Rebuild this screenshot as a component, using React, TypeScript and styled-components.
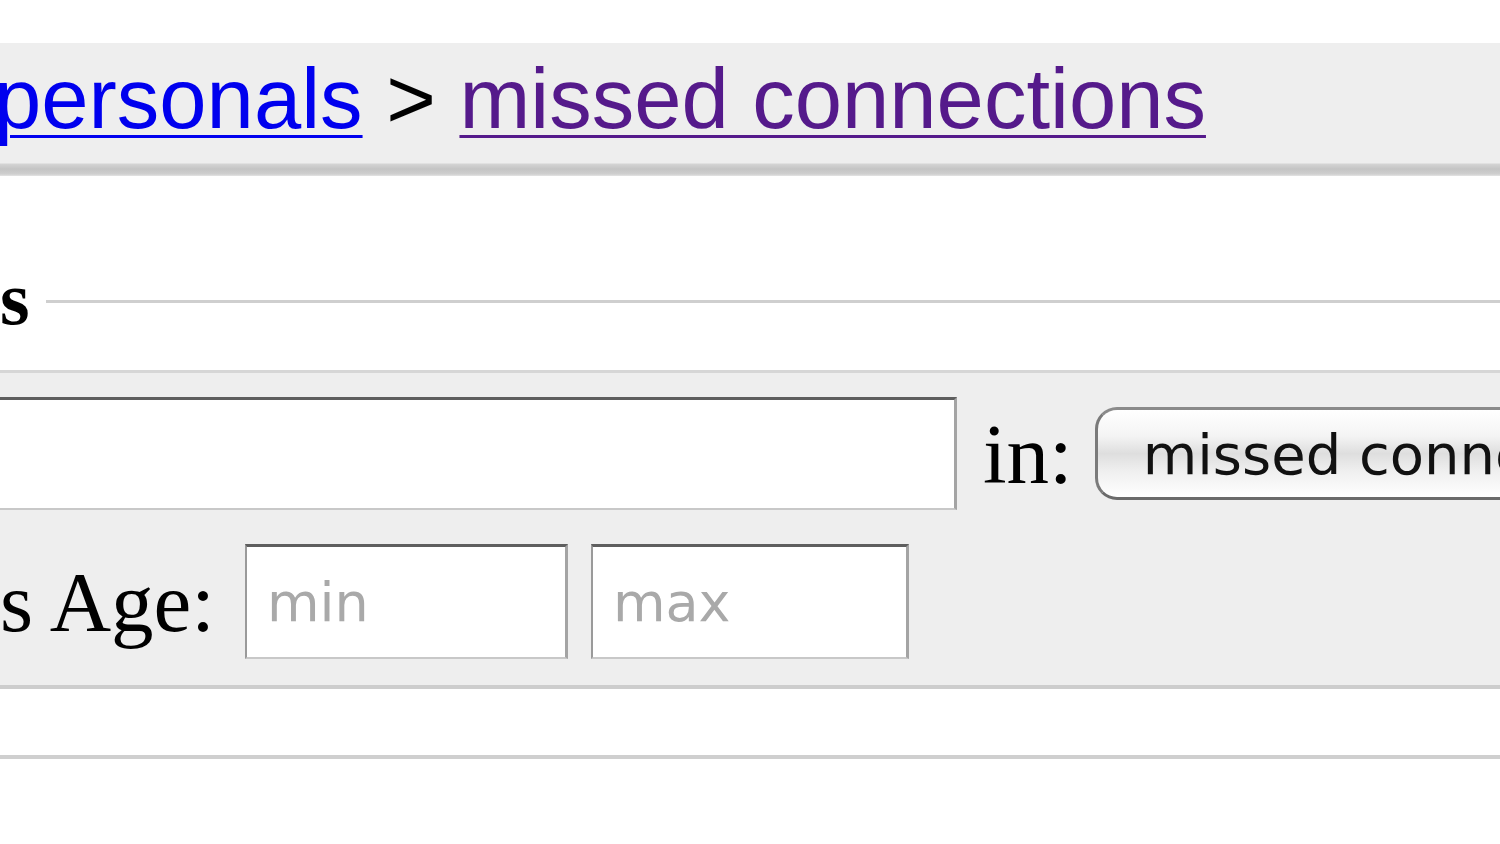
import React from "react";
import styled, { createGlobalStyle } from "styled-components";

const GlobalStyle = createGlobalStyle`
  html, body { margin: 0; padding: 0; background: #ffffff; }
  body { overflow: hidden; }
`;

const Page = styled.div`
  width: 1500px;
  height: 844px;
  overflow: hidden;
  background: #ffffff;
  padding-top: 43px;
  box-sizing: border-box;
`;

const Header = styled.div`
  height: 133px;
  box-sizing: border-box;
  background: linear-gradient(
    to bottom,
    #eeeeee 0,
    #eeeeee 120px,
    #d4d4d4 121px,
    #c4c4c4 126px,
    #cfcfcf 131px,
    #e4e4e4 133px
  );
  display: flex;
  align-items: flex-start;
  padding-top: 6px;
`;

const Crumbs = styled.div`
  font-family: "Liberation Sans", Arial, sans-serif;
  font-size: 85px;
  line-height: 100px;
  margin-left: -6px;
  white-space: nowrap;
  color: #000;
`;

const CrumbLink = styled.a<{ $visited?: boolean }>`
  color: ${(p) => (p.$visited ? "#551a8b" : "#0000ee")};
  text-decoration: underline;
  text-decoration-thickness: 3px;
  text-underline-offset: 7px;
`;

const Sep = styled.span`
  color: #000;
`;

const Fieldset = styled.div`
  margin-top: 95px;
  display: flex;
  flex-direction: column;
`;

const LegendRow = styled.div`
  display: flex;
  align-items: center;
  height: 60px;
`;

const Legend = styled.span`
  font-family: "Liberation Serif", "Times New Roman", serif;
  font-weight: bold;
  font-size: 76px;
  line-height: 60px;
  padding-right: 16px;
  padding-bottom: 6px;
`;

const LegendLine = styled.div`
  flex: 1;
  height: 3px;
  background: #cfcfcf;
`;

const FormBox = styled.div`
  margin-top: 39px;
  background: #eeeeee;
  border-top: 3px solid #d6d6d6;
  border-bottom: 4px solid #cdcdcd;
  height: 319px;
  box-sizing: border-box;
  display: flex;
  flex-direction: column;
  gap: 34px;
  padding-top: 24px;
  overflow: hidden;
`;

const Row = styled.div`
  display: flex;
  align-items: center;
`;

const TextInput = styled.div`
  flex-shrink: 0;
  width: 1000px;
  height: 113px;
  margin-left: -43px;
  box-sizing: border-box;
  background: #fff;
  border-top: 3px solid #5e5e5e;
  border-left: 2px solid #9a9a9a;
  border-right: 3px solid #a4a4a4;
  border-bottom: 2px solid #c8c8c8;
`;

const Label = styled.span<{ $ml: number }>`
  flex-shrink: 0;
  font-family: "Liberation Serif", "Times New Roman", serif;
  font-size: 85px;
  line-height: 90px;
  color: #000;
  margin-left: ${(p) => p.$ml}px;
  white-space: nowrap;
`;

const SelectButton = styled.div`
  flex-shrink: 0;
  margin-left: 22px;
  width: 520px;
  height: 93px;
  box-sizing: border-box;
  border: 3px solid #7a7a7a;
  border-top-color: #8a8a8a;
  border-bottom-color: #6a6a6a;
  border-radius: 22px;
  background: linear-gradient(
    to bottom,
    #ffffff 0%,
    #f4f4f4 30%,
    #dedede 50%,
    #efefef 70%,
    #ffffff 100%
  );
  display: flex;
  align-items: center;
  padding-left: 45px;
  padding-top: 2px;
  font-family: "DejaVu Sans", "Lucida Grande", sans-serif;
  font-size: 56px;
  color: #111;
  white-space: nowrap;
  overflow: hidden;
`;

const AgeInput = styled.div<{ $w: number; $ml: number }>`
  flex-shrink: 0;
  width: ${(p) => p.$w}px;
  height: 115px;
  margin-left: ${(p) => p.$ml}px;
  box-sizing: border-box;
  background: #fff;
  border-top: 3px solid #5e5e5e;
  border-left: 2px solid #9a9a9a;
  border-right: 3px solid #a4a4a4;
  border-bottom: 2px solid #c8c8c8;
  display: flex;
  align-items: center;
  padding-left: 20px;
  font-family: "DejaVu Sans", sans-serif;
  font-size: 54px;
  color: #a9a9a9;
`;

const BottomGap = styled.div`
  height: 66px;
  border-bottom: 4px solid #cfcfcf;
`;

export default function App() {
  return (
    <>
      <GlobalStyle />
      <Page>
        <Header>
          <Crumbs>
            <CrumbLink href="#">personals</CrumbLink> <Sep>&gt;</Sep>{" "}
            <CrumbLink href="#" $visited>
              missed connections
            </CrumbLink>
          </Crumbs>
        </Header>
        <Fieldset>
          <LegendRow>
            <Legend>s</Legend>
            <LegendLine />
          </LegendRow>
          <FormBox>
            <Row>
              <TextInput />
              <Label $ml={26}>in:</Label>
              <SelectButton>missed connections</SelectButton>
            </Row>
            <Row>
              <Label $ml={0}>s Age:</Label>
              <AgeInput $w={323} $ml={30}>min</AgeInput>
              <AgeInput $w={318} $ml={23}>max</AgeInput>
            </Row>
          </FormBox>
          <BottomGap />
        </Fieldset>
      </Page>
    </>
  );
}
